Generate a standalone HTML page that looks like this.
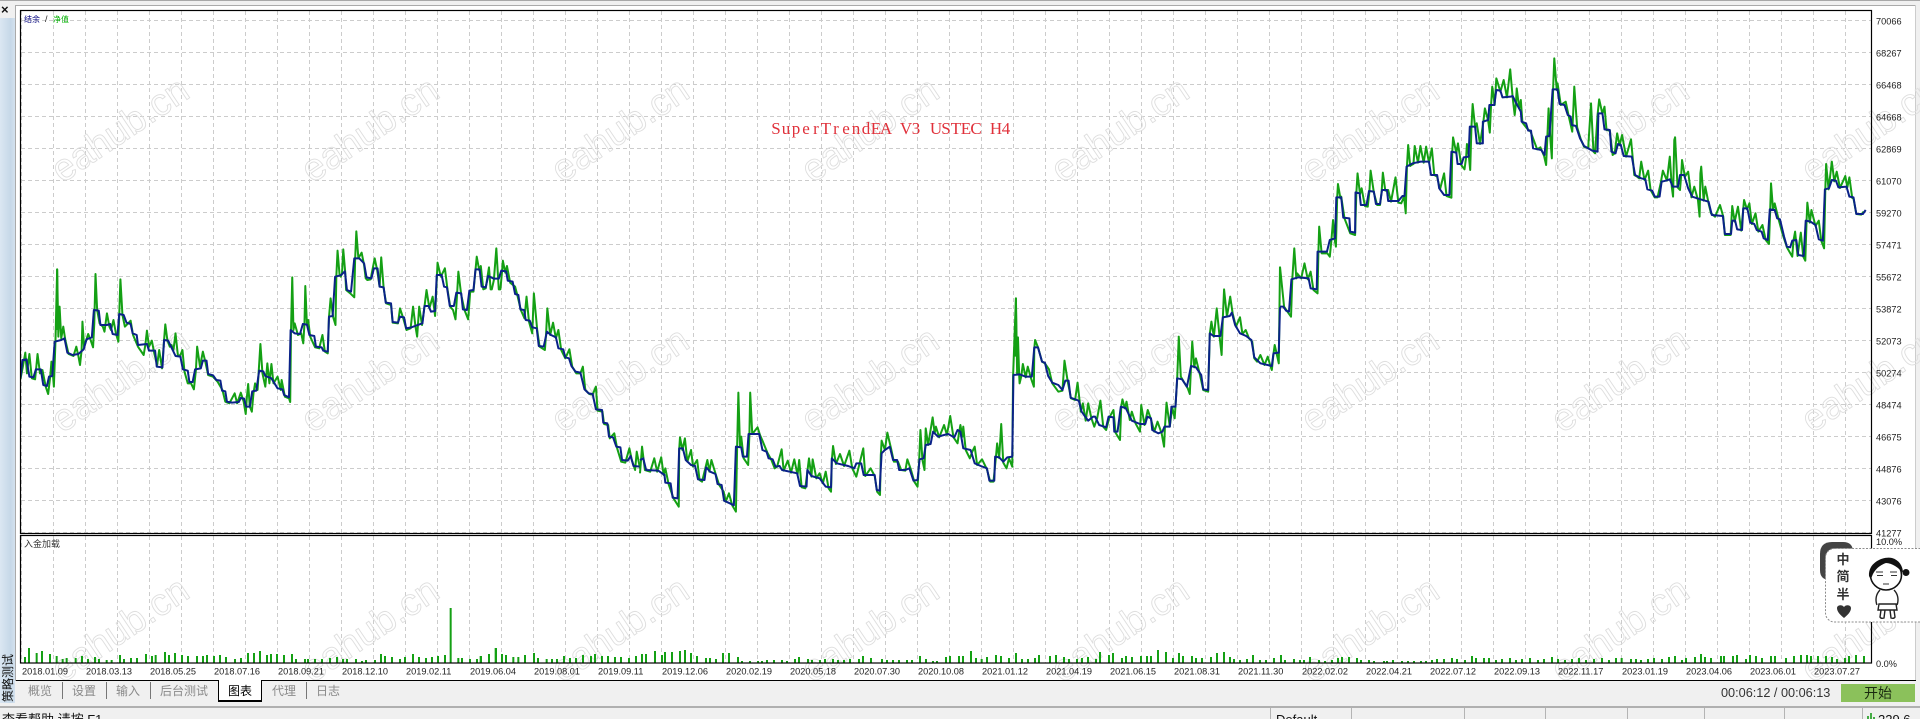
<!DOCTYPE html>
<html><head><meta charset="utf-8">
<style>
html,body{margin:0;padding:0;background:#f0f0f0;width:1920px;height:719px;overflow:hidden}
#p{position:relative;width:1920px;height:719px;overflow:hidden;font-family:"Liberation Sans","Noto Sans CJK SC",sans-serif}
.a{position:absolute;white-space:nowrap}
svg text{font-family:"Liberation Sans","Noto Sans CJK SC",sans-serif}
.l{position:absolute;width:1px;height:22px;background:#777}
.t{position:absolute;top:683px;font-size:12px;line-height:17px;color:#8a8a8a;white-space:nowrap}
.s{position:absolute;top:708px;width:1px;height:11px;background:#b4b4b4}
</style></head><body><div id="p">
<div class="a" style="left:0;top:0;width:1920px;height:1px;background:#a8a8a8"></div>
<div class="a" style="left:15px;top:5px;width:1901px;height:676px;background:#fff;border-top:1px solid #aaa;border-left:1px solid #aaa;box-sizing:border-box"></div>
<div class="a" style="left:1915px;top:5px;width:1px;height:676px;background:#ccc"></div>
<div class="a" style="left:0;top:18px;width:15px;height:685px;background:linear-gradient(90deg,#dbe7f2,#c6d8e8 70%,#d3e1ee)"></div>
<div class="a" style="left:1px;top:3px;font-size:13px;line-height:14px;font-weight:bold;color:#111">×</div>
<svg class="a" style="left:0;top:0" width="1920" height="719" viewBox="0 0 1920 719">
<defs>
<pattern id="v" width="32" height="7" patternUnits="userSpaceOnUse" x="53" y="11"><rect width="1" height="4" fill="#cccccc"/></pattern>
<pattern id="h" width="7" height="32" patternUnits="userSpaceOnUse" x="21" y="20"><rect width="4" height="1" fill="#cccccc"/></pattern>
<clipPath id="c"><rect x="0" y="0" width="1920" height="680"/></clipPath>
<clipPath id="m"><rect x="21" y="11" width="1850" height="522"/></clipPath>
</defs>
<rect x="21" y="11" width="1850" height="522" fill="url(#v)"/>
<rect x="21" y="11" width="1850" height="522" fill="url(#h)"/>
<rect x="21" y="536" width="1850" height="127" fill="url(#v)"/>
<g clip-path="url(#c)" fill="none" stroke="#dedede" stroke-width=".9" font-size="38" text-anchor="middle">
<text transform="translate(127 140) rotate(-34)">eahub.cn</text><text transform="translate(377 140) rotate(-34)">eahub.cn</text><text transform="translate(627 140) rotate(-34)">eahub.cn</text><text transform="translate(877 140) rotate(-34)">eahub.cn</text><text transform="translate(1127 140) rotate(-34)">eahub.cn</text><text transform="translate(1377 140) rotate(-34)">eahub.cn</text><text transform="translate(1627 140) rotate(-34)">eahub.cn</text><text transform="translate(1877 140) rotate(-34)">eahub.cn</text>
<text transform="translate(127 390) rotate(-34)">eahub.cn</text><text transform="translate(377 390) rotate(-34)">eahub.cn</text><text transform="translate(627 390) rotate(-34)">eahub.cn</text><text transform="translate(877 390) rotate(-34)">eahub.cn</text><text transform="translate(1127 390) rotate(-34)">eahub.cn</text><text transform="translate(1377 390) rotate(-34)">eahub.cn</text><text transform="translate(1627 390) rotate(-34)">eahub.cn</text><text transform="translate(1877 390) rotate(-34)">eahub.cn</text>
<text transform="translate(127 640) rotate(-34)">eahub.cn</text><text transform="translate(377 640) rotate(-34)">eahub.cn</text><text transform="translate(627 640) rotate(-34)">eahub.cn</text><text transform="translate(877 640) rotate(-34)">eahub.cn</text><text transform="translate(1127 640) rotate(-34)">eahub.cn</text><text transform="translate(1377 640) rotate(-34)">eahub.cn</text><text transform="translate(1627 640) rotate(-34)">eahub.cn</text><text transform="translate(1877 640) rotate(-34)">eahub.cn</text>
</g>
<g clip-path="url(#m)" fill="none" stroke-linejoin="round">
<g transform="translate(0 230) scale(.40816 .33333)">
<polyline vector-effect="non-scaling-stroke" stroke="#14a014" stroke-width="2" points="50,448 56,410 62,368 66,430 72,372 78,445 86,448 92,372 98,430 104,420 112,470 118,492 123,440 126,395 130,440 132,470 136,330 140,118 143,320 146,230 150,325 155,290 160,330 168,372 180,378 187,350 192,378 196,405 200,360 202,275 206,350 210,335 216,312 222,330 228,352 231,280 234,132 238,240 244,280 252,290 256,305 262,250 268,290 272,300 278,270 284,310 290,335 292,260 295,148 300,255 306,290 314,280 320,272 326,315 338,350 352,375 356,345 360,302 365,350 372,332 378,370 385,405 390,360 397,415 402,330 405,283 410,330 416,350 420,345 425,360 430,310 436,378 442,375 447,360 452,425 460,460 468,460 475,478 480,420 483,350 490,410 497,365 503,395 510,435 522,440 533,455 545,480 552,515 562,520 575,490 581,520 590,488 597,515 602,552 605,500 608,462 612,530 617,545 621,490 625,460 631,480 638,342 643,430 650,470 655,400 660,460 665,402 670,460 680,440 688,480 690,450 698,500 708,505 711,516 713,300 716,142 719,300 722,280 730,315 738,310 743,340 746,280 748,168 752,285 755,270 760,320 772,352 782,355 790,315 796,365 803,370 806,262 810,205 816,260 822,285 824,140 827,62 832,135 835,140 838,130 841,58 846,130 848,180 858,190 868,202 870,90 873,4 878,85 886,68 892,105 896,145 900,150 908,148 918,85 924,120 930,170 934,82 940,175 946,220 958,225 962,278 975,280 980,235 988,265 996,300 1006,295 1012,230 1018,290 1022,320 1027,230 1034,285 1040,230 1045,180 1052,235 1060,200 1066,258 1072,98 1080,140 1090,115 1096,175 1103,230 1110,240 1116,268 1120,190 1123,125 1130,195 1138,240 1147,268 1152,185 1160,185 1168,80 1174,120 1178,108 1184,178 1190,175 1198,112 1202,178 1205,178 1210,150 1216,55 1222,178 1226,178 1230,125 1232,92 1238,128 1242,108 1250,158 1262,170 1268,198 1276,240 1285,265 1290,200 1296,275 1304,310 1308,190 1316,298 1322,350 1335,360 1338,310 1341,235 1348,315 1355,278 1362,325 1368,300 1375,360 1385,385 1395,358 1402,410 1412,430 1422,430 1428,410 1434,480 1444,492 1452,494 1460,470 1464,542 1476,545 1480,582 1490,585 1494,625 1505,610 1512,655 1522,695 1532,698 1542,655 1548,690 1556,720 1560,665 1568,715"/>
<polyline vector-effect="non-scaling-stroke" stroke="#14a014" stroke-width="2" points="139,300 140,118 141,240"/>
<polyline vector-effect="non-scaling-stroke" stroke="#0a2288" stroke-width="2" points="50,445 55,390 65,388 72,440 82,442 88,418 100,418 106,465 115,468 120,440 128,438 134,335 150,330 158,325 165,368 178,375 192,372 205,358 212,328 225,322 230,240 242,242 246,285 262,285 270,282 276,312 288,315 292,252 303,255 310,278 320,282 325,310 335,315 338,345 360,342 365,362 380,362 384,410 398,412 402,330 412,332 420,352 430,378 442,380 448,418 460,422 464,456 472,456 478,418 492,415 497,392 506,392 510,432 522,436 530,450 540,452 544,482 552,484 556,515 568,518 585,516 590,504 598,506 603,530 612,530 618,484 628,482 635,422 645,424 650,438 665,445 680,475 692,478 696,495 708,502 712,300 722,310 735,312 742,282 752,284 758,315 770,318 774,350 788,352 792,362 803,365 806,260 815,258 821,140 835,136 845,124 850,180 860,185 868,85 880,85 892,100 898,142 910,145 916,115 925,115 930,170 940,172 945,218 958,220 962,276 975,278 980,260 990,262 995,295 1008,292 1035,280 1040,228 1050,228 1056,245 1066,243 1070,135 1082,135 1088,170 1095,172 1102,228 1112,228 1118,188 1130,190 1134,238 1144,240 1150,182 1160,180 1165,118 1175,118 1180,170 1190,172 1196,138 1210,146 1222,146 1228,122 1240,124 1244,152 1256,155 1262,192 1270,195 1275,238 1284,240 1288,270 1298,272 1304,292 1315,295 1320,348 1332,350 1340,305 1350,315 1362,322 1368,355 1380,358 1385,382 1394,385 1400,408 1410,425 1422,428 1432,478 1442,490 1452,492 1460,538 1475,540 1478,578 1488,580 1492,620 1502,622 1510,650 1520,652 1524,690 1538,692 1545,678 1552,708 1568,710"/>
</g>
<g transform="translate(640 230) scale(.40816 .33333)">
<polyline vector-effect="non-scaling-stroke" stroke="#14a014" stroke-width="2" points="0,730 5,650 12,720 25,725 35,685 42,725 52,682 58,735 62,715 70,762 82,805 95,830 96,660 98,622 104,660 110,625 116,695 125,660 130,710 140,690 146,750 152,755 160,715 165,690 170,725 175,690 186,735 194,765 205,785 210,815 218,790 226,826 235,845 238,650 241,488 245,650 248,620 254,685 265,705 268,615 270,488 275,612 288,592 294,615 300,632 312,668 322,690 330,715 336,710 347,658 352,722 362,692 370,728 378,688 386,735 390,690 396,772 405,775 410,725 414,685 420,740 423,688 432,745 440,730 448,760 455,725 462,775 468,785 470,690 473,648 480,702 490,672 500,708 513,662 520,715 530,740 538,700 547,655 552,738 565,715 575,738 581,785 588,795 590,675 592,632 600,660 606,608 615,655 622,695 632,695 640,720 650,722 655,688 664,720 672,755 680,770 684,690 687,600 692,690 697,720 700,595 706,645 717,562 722,610 725,590 733,622 745,585 752,615 760,558 768,622 778,640 782,605 785,585 790,620 792,590 798,660 808,685 814,665 820,650 826,705 838,688 850,718 858,755 866,755 872,682 875,640 880,684 885,582 890,698 898,715 904,685 912,710 914,440 921,205 924,432 926,322 929,435 930,460 934,440 938,402 945,442 950,410 958,445 965,470 966,355 968,330 976,355 985,395 992,400 1002,418 1010,460 1025,485 1035,482 1040,392 1048,455 1056,505 1066,510 1072,458 1080,545 1085,520 1092,572 1098,520 1106,565 1113,590 1120,565 1128,512 1135,590 1142,600 1150,562 1160,540 1165,608 1176,630 1179,530 1182,508 1188,535 1192,515 1200,570 1205,545 1214,580 1225,605 1228,525 1236,585 1244,540 1252,568 1260,605 1268,575 1278,610 1284,650 1286,595 1290,518 1298,590 1304,532 1310,565 1316,450 1320,320 1325,440 1332,455 1342,475 1347,492 1350,410 1353,335 1358,412 1362,385 1372,435 1380,480 1392,485 1396,312 1400,275 1406,320 1413,235 1420,320 1425,375 1428,262 1431,178 1438,260 1446,200 1452,250 1460,290 1470,262 1476,312 1484,300 1492,325 1500,335 1505,385 1512,395 1520,375 1530,405 1538,380 1545,410 1548,420 1552,372 1555,345 1560,372 1565,400 1568,110"/>
<polyline vector-effect="non-scaling-stroke" stroke="#14a014" stroke-width="2" points="920,380 921,205 922,330"/>
<polyline vector-effect="non-scaling-stroke" stroke="#0a2288" stroke-width="2" points="0,690 8,685 15,720 45,722 60,735 62,758 75,760 80,803 92,805 96,655 105,655 112,690 125,705 135,708 142,748 158,750 162,712 172,725 185,732 190,762 200,765 206,812 220,820 230,826 235,650 248,652 252,680 262,680 266,612 292,612 300,660 310,665 315,685 325,688 332,710 342,708 348,720 385,730 392,768 408,770 410,720 420,738 440,745 455,770 468,772 470,685 482,700 510,708 525,715 530,700 542,700 548,735 575,735 580,780 587,782 592,670 600,660 612,650 620,690 630,690 635,720 650,720 660,715 670,752 680,750 685,688 695,685 700,645 712,642 718,605 730,620 745,615 755,612 770,622 778,600 785,605 792,655 810,660 820,700 835,708 850,715 856,752 868,752 870,680 880,682 890,695 900,682 912,680 915,435 930,433 945,440 960,440 966,352 975,352 985,395 992,398 1000,438 1010,458 1025,465 1035,480 1042,452 1050,452 1055,503 1075,512 1082,545 1098,572 1110,560 1115,560 1125,585 1142,592 1148,560 1160,562 1162,605 1170,605 1178,530 1190,534 1205,572 1225,582 1238,582 1243,560 1252,565 1255,600 1270,610 1280,605 1285,590 1298,590 1302,530 1312,530 1316,445 1328,448 1340,470 1350,408 1362,412 1375,435 1380,478 1392,480 1396,310 1405,318 1422,318 1428,262 1445,258 1450,248 1458,285 1470,310 1485,318 1498,330 1505,382 1520,400 1548,408 1552,370 1565,368 1568,232"/>
</g>
<g transform="translate(1280 40) scale(.40816 .33333)">
<polyline vector-effect="non-scaling-stroke" stroke="#14a014" stroke-width="2" points="0,680 5,740 10,800 20,818 27,830 30,720 35,625 40,715 42,700 52,715 60,670 68,718 75,695 82,750 92,760 94,640 96,560 102,640 105,640 116,640 122,650 126,600 130,540 134,600 137,620 140,475 142,432 148,475 150,470 158,535 172,580 184,585 187,460 190,400 196,462 200,445 208,498 215,500 219,455 222,392 230,458 238,495 245,495 249,455 252,398 258,452 265,450 272,485 283,412 290,488 297,490 304,470 308,520 311,380 314,315 319,378 322,375 327,372 330,318 338,368 344,318 352,368 358,320 365,368 372,325 378,405 385,410 392,448 402,400 408,468 420,473 422,338 424,292 432,340 436,310 444,375 452,388 456,352 458,312 463,352 466,390 469,262 472,192 478,262 482,250 490,312 498,248 502,205 510,242 514,278 517,198 520,140 526,195 530,115 540,155 548,120 556,172 564,88 570,172 575,225 578,190 580,145 586,205 590,180 594,248 605,265 614,275 620,295 630,328 638,322 647,348 652,375 655,292 658,205 662,290 666,355 669,150 672,55 678,150 680,130 688,195 700,185 708,232 716,275 719,200 721,140 728,262 737,298 745,320 755,325 762,190 768,335 772,340 778,225 782,178 790,222 795,200 800,270 808,272 815,345 820,340 826,280 832,316 838,285 848,350 860,298 868,405 875,410 880,415 885,365 893,420 902,392 908,450 918,472 925,472 933,428 938,392 948,422 955,350 960,442 963,470 966,300 968,292 974,442 980,450 983,405 985,360 992,410 1000,395 1008,472 1015,440 1024,480 1028,530 1030,400 1032,380 1038,482 1042,440 1050,490 1056,520 1066,530 1078,495 1086,530 1090,585 1104,585 1108,498 1114,545 1122,500 1130,572 1137,480 1144,508 1150,490 1156,552 1165,520 1172,575 1182,555 1190,600 1198,612 1201,510 1203,430 1208,510 1212,490 1222,540 1232,585 1242,622 1255,650 1258,602 1262,575 1268,648 1276,578 1282,650 1287,662 1290,545 1292,488 1298,548 1302,510 1312,558 1320,542 1326,602 1333,625 1336,450 1338,372 1344,448 1352,365 1358,424 1364,395 1372,444 1385,408 1390,442 1395,412 1402,474 1405,475 1412,522 1424,524 1430,515"/>
<polyline vector-effect="non-scaling-stroke" stroke="#0a2288" stroke-width="2" points="0,800 8,800 15,812 22,815 28,718 45,712 70,715 75,745 90,748 92,635 115,635 122,600 135,595 138,472 150,472 155,533 170,535 172,575 184,578 185,457 195,460 198,495 212,495 218,453 230,455 235,492 245,492 250,450 262,450 265,483 290,483 300,468 305,468 310,380 325,370 345,365 365,365 370,405 385,405 390,445 402,465 415,465 420,335 432,338 435,372 445,372 450,352 462,350 465,260 478,260 482,310 497,310 497,245 510,240 513,195 525,195 530,150 540,152 545,172 565,170 570,168 578,188 590,215 592,245 603,250 608,272 615,272 620,325 640,330 648,345 652,290 660,288 668,148 680,148 685,192 697,195 705,225 712,230 715,255 725,258 735,295 745,318 765,332 778,335 780,220 790,220 795,268 808,270 812,335 822,340 828,312 835,315 842,348 862,350 870,405 885,415 895,418 900,448 912,452 918,470 930,470 935,425 945,422 955,418 962,440 975,440 980,405 990,405 1000,445 1010,470 1030,478 1050,485 1058,525 1085,528 1090,582 1105,582 1108,542 1115,542 1120,568 1132,570 1135,505 1145,505 1152,548 1162,552 1168,570 1180,575 1185,595 1195,600 1200,508 1212,510 1218,535 1225,538 1235,590 1242,620 1250,622 1255,602 1265,600 1270,645 1283,648 1288,542 1300,545 1312,555 1320,598 1330,602 1335,448 1345,445 1352,420 1362,422 1368,442 1388,440 1395,470 1405,472 1412,522 1428,522 1435,510"/>
</g>
</g>
<g fill="none" stroke="#14a014" stroke-width="6">
<path transform="translate(0 663) scale(.33333 1)" d="M75 0v-6M87 0v-15M110 0v-10M126 0v-12M150 0v-9M170 0v-7M188 0v-4M200 0v-5M227 0v-5M246 0v-7M264 0v-4M285 0v-6M297 0v-4M320 0v-3M335 0v-3M360 0v-8M372 0v-4M393 0v-5M411 0v-5M438 0v-9M456 0v-7M467 0v-8M495 0v-11M507 0v-8M525 0v-10M546 0v-8M564 0v-7M591 0v-7M609 0v-7M621 0v-8M642 0v-7M660 0v-8M678 0v-6M705 0v-4M723 0v-5M744 0v-10M762 0v-10M780 0v-12M801 0v-8M813 0v-9M831 0v-9M852 0v-8M876 0v-9M888 0v-4M915 0v-4M924 0v-4M945 0v-4M966 0v-4M990 0v-5M1011 0v-6M1029 0v-4M1041 0v-4M1068 0v-4M1086 0v-2M1098 0v-3M1125 0v-3M1143 0v-9M1155 0v-7M1176 0v-6M1200 0v-4M1215 0v-6M1239 0v-9M1257 0v-6M1278 0v-5M1296 0v-6M1314 0v-7M1335 0v-8M1352 0v-55M1375 0v-5M1386 0v-5M1410 0v-4M1431 0v-4M1443 0v-7"/>
<path transform="translate(0 663) scale(.33333 1)" d="M1467 0v-9M1488 0v-15"/>
<path transform="translate(480 663) scale(.33333 1)" d="M2 0v-7M27 0v-9M47 0v-15M66 0v-9M78 0v-8M100 0v-6M115 0v-6M135 0v-8M162 0v-10M174 0v-5M200 0v-4M216 0v-4M231 0v-4M252 0v-7M270 0v-5M288 0v-5M309 0v-8M333 0v-7M345 0v-9M366 0v-7M384 0v-7M405 0v-6M423 0v-6M447 0v-5M468 0v-7M486 0v-9M498 0v-9M525 0v-12M546 0v-8M555 0v-11M576 0v-11M600 0v-12M615 0v-13M633 0v-10M651 0v-7M678 0v-5M690 0v-5M708 0v-4M729 0v-10M747 0v-10M774 0v-6M786 0v-2M810 0v-2M834 0v-2M846 0v-2M861 0v-3M882 0v-3M906 0v-3M921 0v-2M945 0v-4M957 0v-6M984 0v-4M996 0v-3M1020 0v-3M1035 0v-4M1059 0v-4M1074 0v-3M1092 0v-3M1110 0v-4M1137 0v-4M1149 0v-7M1173 0v-5M1206 0v-4M1221 0v-3M1239 0v-3M1257 0v-3M1281 0v-3M1296 0v-3M1320 0v-7M1338 0v-4M1359 0v-2M1371 0v-2M1398 0v-6M1410 0v-7M1437 0v-7M1449 0v-7M1473 0v-12M1488 0v-5"/>
<path transform="translate(980 663) scale(.33333 1)" d="M5 0v-4M21 0v-6M48 0v-8M63 0v-7M87 0v-5M108 0v-10M126 0v-4M144 0v-4M165 0v-5M177 0v-8M210 0v-7M228 0v-8M252 0v-6M267 0v-4M291 0v-4M306 0v-5M324 0v-6M348 0v-4M360 0v-11M387 0v-8M399 0v-10M426 0v-5M438 0v-7M456 0v-6M483 0v-7M501 0v-7M513 0v-7M534 0v-13M558 0v-11M579 0v-5M597 0v-10M609 0v-7M636 0v-7M648 0v-5M666 0v-5M693 0v-6M711 0v-10M732 0v-11M750 0v-6M762 0v-4M780 0v-3M801 0v-4M819 0v-8M840 0v-3M858 0v-3M882 0v-5M903 0v-8M915 0v-3M942 0v-4M960 0v-3M972 0v-3M990 0v-6M1017 0v-3M1035 0v-2M1056 0v-3M1074 0v-5M1086 0v-6M1107 0v-6M1131 0v-5M1143 0v-3M1167 0v-3M1182 0v-2M1212 0v-2M1221 0v-2M1239 0v-3M1266 0v-2M1284 0v-2M1302 0v-2M1323 0v-2M1338 0v-2M1356 0v-3M1371 0v-4M1392 0v-4M1416 0v-5M1431 0v-4M1455 0v-3M1476 0v-7M1488 0v-5"/>
<path transform="translate(1480 663) scale(.33333 1)" d="M12 0v-5M27 0v-5M48 0v-3M66 0v-4M90 0v-5M108 0v-3M126 0v-4M150 0v-5M174 0v-3M192 0v-4M216 0v-6M234 0v-4M255 0v-3M276 0v-4M297 0v-5M318 0v-3M342 0v-4M366 0v-5M387 0v-3M408 0v-5"/>
<path transform="translate(1620 663) scale(.33333 1)" d="M5 0v-5M33 0v-4M48 0v-4M63 0v-3M84 0v-4M102 0v-5M126 0v-4M147 0v-6M165 0v-7M186 0v-3M198 0v-5M225 0v-6M243 0v-9M255 0v-6M273 0v-5M303 0v-7M312 0v-7M339 0v-7M351 0v-8M378 0v-4M390 0v-8M408 0v-7M426 0v-5M453 0v-7M465 0v-7M498 0v-5M522 0v-7M543 0v-8M561 0v-8M573 0v-7M594 0v-7M618 0v-7M636 0v-6M651 0v-4M675 0v-5M687 0v-7M708 0v-8M732 0v-7"/>
</g>
<rect x="20.5" y="10.5" width="1851" height="523" fill="none" stroke="#000" stroke-width="1.2"/>
<rect x="20.5" y="535.5" width="1851" height="127.5" fill="none" stroke="#000" stroke-width="1.2"/>
<text y="134" fill="#e0303a" font-size="17" text-anchor="middle" style="font-family:'Liberation Serif',serif" x="776 786 796 806 816 826 836 846 856 866 876 886 896 906 916 926 936 946 956 966 976 986 996 1006">SuperTrendEA V3 USTEC H4</text>
<text x="24" y="22" fill="#00007f" font-size="8">结余</text><text x="45" y="22" fill="#222" font-size="9">/</text><text x="53" y="22" fill="#00b000" font-size="8">净值</text>
<text x="24" y="547" fill="#333" font-size="9">入金加载</text>
<g font-size="9.2" fill="#222">
<text x="1876" y="24.5">70066</text><text x="1876" y="56.5">68267</text><text x="1876" y="88.5">66468</text><text x="1876" y="120.5">64668</text><text x="1876" y="152.5">62869</text><text x="1876" y="184.5">61070</text><text x="1876" y="216.5">59270</text><text x="1876" y="248.5">57471</text><text x="1876" y="280.5">55672</text><text x="1876" y="312.5">53872</text><text x="1876" y="344.5">52073</text><text x="1876" y="376.5">50274</text><text x="1876" y="408.5">48474</text><text x="1876" y="440.5">46675</text><text x="1876" y="472.5">44876</text><text x="1876" y="504.5">43076</text><text x="1876" y="536.5">41277</text>
<text x="1876" y="545">10.0%</text><text x="1876" y="667">0.0%</text>
<text x="22" y="674.5">2018.01.09</text><text x="86" y="674.5">2018.03.13</text><text x="150" y="674.5">2018.05.25</text><text x="214" y="674.5">2018.07.16</text><text x="278" y="674.5">2018.09.21</text><text x="342" y="674.5">2018.12.10</text><text x="406" y="674.5">2019.02.11</text><text x="470" y="674.5">2019.06.04</text><text x="534" y="674.5">2019.08.01</text><text x="598" y="674.5">2019.09.11</text><text x="662" y="674.5">2019.12.06</text><text x="726" y="674.5">2020.02.19</text><text x="790" y="674.5">2020.05.18</text><text x="854" y="674.5">2020.07.30</text><text x="918" y="674.5">2020.10.08</text><text x="982" y="674.5">2021.01.12</text><text x="1046" y="674.5">2021.04.19</text><text x="1110" y="674.5">2021.06.15</text><text x="1174" y="674.5">2021.08.31</text><text x="1238" y="674.5">2021.11.30</text><text x="1302" y="674.5">2022.02.02</text><text x="1366" y="674.5">2022.04.21</text><text x="1430" y="674.5">2022.07.12</text><text x="1494" y="674.5">2022.09.13</text><text x="1558" y="674.5">2022.11.17</text><text x="1622" y="674.5">2023.01.19</text><text x="1686" y="674.5">2023.04.06</text><text x="1750" y="674.5">2023.06.01</text><text x="1814" y="674.5">2023.07.27</text>
</g>
</svg>
<div class="a" style="left:16px;top:681px;width:1900px;height:25px;background:#f0f0f0"></div>
<div class="a" style="left:16px;top:680px;width:1900px;height:1.4px;background:#000"></div>
<div class="a" style="left:218px;top:680px;width:44px;height:22px;background:#fff;border:1px solid #000;border-top:0;border-bottom-width:2px;box-sizing:border-box"></div>
<div class="t" style="left:28px">概览</div><div class="l" style="left:62px;top:682px;height:17px"></div>
<div class="t" style="left:72px">设置</div><div class="l" style="left:106px;top:682px;height:17px"></div>
<div class="t" style="left:116px">输入</div><div class="l" style="left:150px;top:682px;height:17px"></div>
<div class="t" style="left:160px">后台测试</div>
<div class="t" style="left:228px;color:#000">图表</div>
<div class="t" style="left:272px">代理</div><div class="l" style="left:306px;top:682px;height:17px"></div>
<div class="t" style="left:316px">日志</div>
<div class="a" style="left:1721px;top:685px;font-size:12.7px;line-height:16px;color:#333">00:06:12 / 00:06:13</div>
<div class="a" style="left:1841px;top:684px;width:74px;height:18px;background:#8bc15b;color:#1a2a10;font-size:14px;line-height:18px;text-align:center">开始</div>
<div class="a" style="left:0;top:706px;width:1920px;height:2px;background:#b0b0b0"></div>
<div class="a" style="left:0;top:708px;width:1920px;height:11px;background:#f0f0f0"></div>
<div class="a" style="left:2px;top:712px;font-size:13px;line-height:15px;color:#111">查看帮助,请按 F1</div>
<div class="s" style="left:1270px"></div><div class="s" style="left:1351px"></div><div class="s" style="left:1464px"></div><div class="s" style="left:1545px"></div><div class="s" style="left:1627px"></div><div class="s" style="left:1704px"></div><div class="s" style="left:1784px"></div><div class="s" style="left:1862px"></div>
<div class="a" style="left:1276px;top:712px;font-size:13px;line-height:15px;color:#111">Default</div>
<div class="a" style="left:1878px;top:712px;font-size:13px;line-height:15px;color:#111">229.6</div>
<svg class="a" style="left:1866px;top:712px" width="10" height="7"><path d="M2 7V4M5 7V1M8 7V5" stroke="#1a9a1a" stroke-width="1.6"/></svg>
<div class="a" style="left:2px;top:654px;width:12px;height:48px;font-size:12px;line-height:12px;color:#111"><span style="display:block;width:48px;transform-origin:0 0;transform:translate(0,48px) rotate(-90deg)">策略测试</span></div>
<svg class="a" style="left:1815px;top:538px" width="105" height="90" viewBox="1815 538 105 90">
<path d="M1820 570V554Q1820 542 1832 542H1843Q1853 542 1853 552V580H1830Q1820 580 1820 570Z" fill="#444"/>
<rect x="1825.5" y="548.5" width="110" height="73.5" rx="9" fill="#fff" stroke="#8c8c8c" stroke-dasharray="2 1.5"/>
<text x="1843" y="564" font-size="13" font-weight="bold" fill="#333" text-anchor="middle">中</text>
<text x="1843" y="581" font-size="13" font-weight="bold" fill="#333" text-anchor="middle">简</text>
<text x="1843" y="599" font-size="13" font-weight="bold" fill="#333" text-anchor="middle">半</text>
<path d="M1844 618C1839 614 1837 611 1837 608C1837 605 1842 604 1844 607C1846 604 1851 605 1851 608C1851 611 1849 614 1844 618Z" fill="#333"/>
<ellipse cx="1886" cy="575" rx="15.5" ry="15" fill="#fff" stroke="#111" stroke-width="1.6"/>
<path d="M1869 576C1868 562 1884 556 1892 558C1899 560 1903 566 1903 573C1899 568 1892 563 1886 563C1880 565 1873 570 1871 580Z" fill="#111"/>
<circle cx="1906" cy="572.5" r="3.5" fill="#111"/>
<path d="M1876 572h7M1890 572h7M1877 575.5h6M1891 575.5h6M1883 584h6" stroke="#333" stroke-width="1.1" fill="none"/>
<path d="M1880 590C1876 594 1875 600 1877 605M1894 590C1898 594 1899 600 1897 605M1879 604H1896L1897 610H1878ZM1881 610L1880 617Q1881 619 1884 618L1885 610M1890 610L1891 618Q1894 619 1895 617L1894 610" fill="#fff" stroke="#222" stroke-width="1.4"/>
</svg>
</div></body></html>
